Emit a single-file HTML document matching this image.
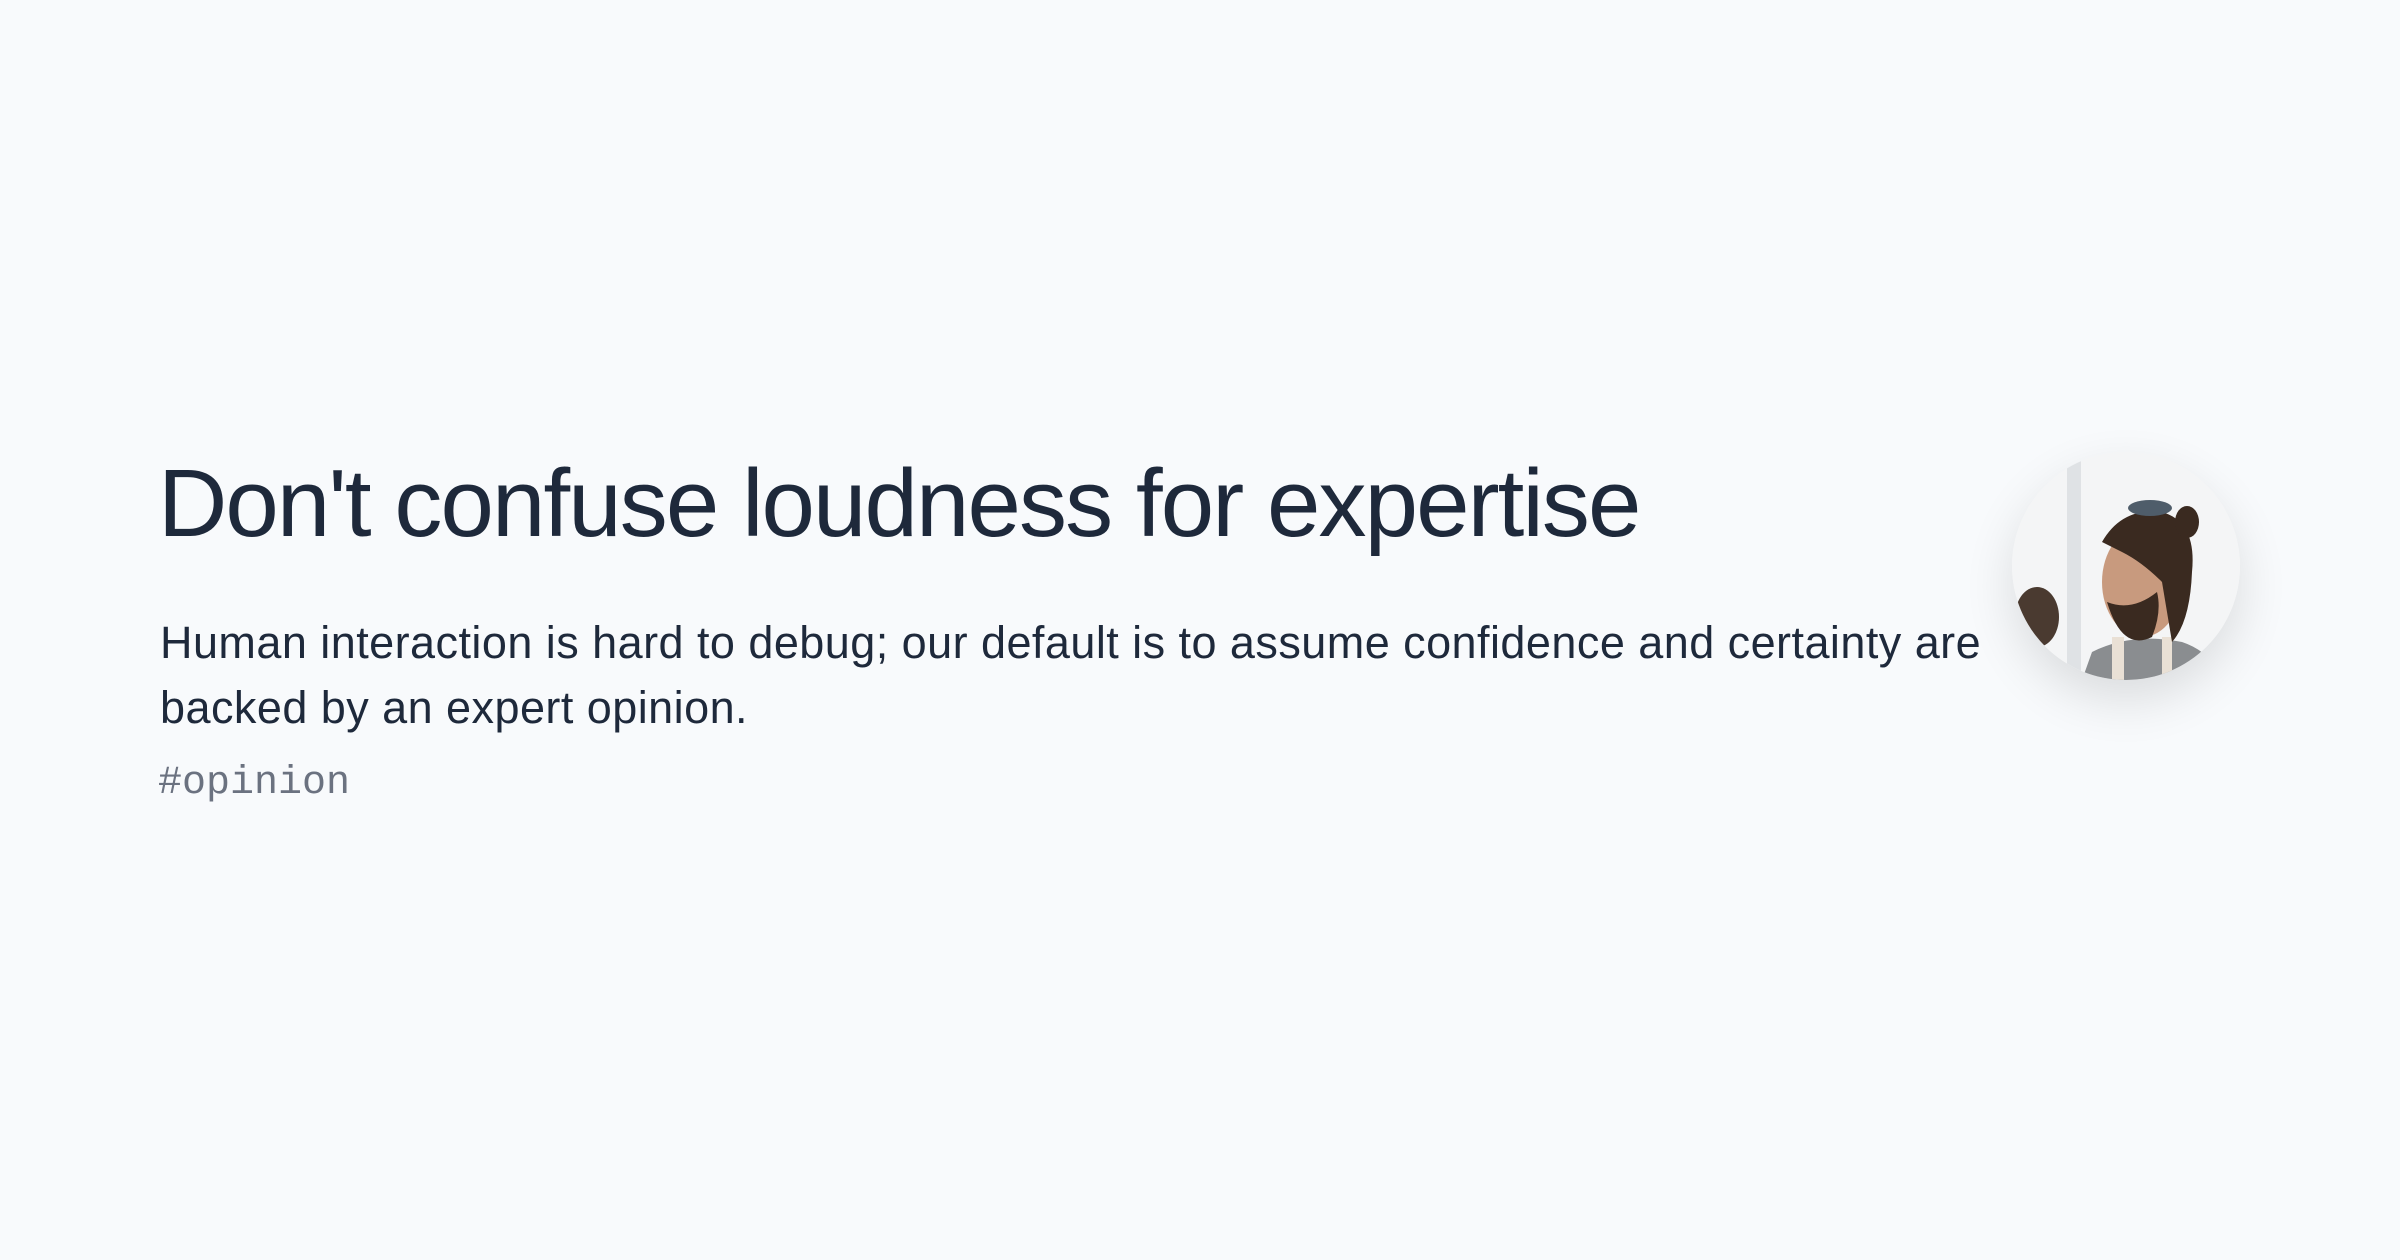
<!DOCTYPE html>
<html><head><meta charset="utf-8"><style>
html,body{margin:0;padding:0;width:2400px;height:1260px;background:#f8fafc;overflow:hidden}
.t{position:absolute;left:158px;top:446px;font:400 96px/1.2 "Liberation Sans",sans-serif;color:#1e293b;letter-spacing:-1.9px;white-space:nowrap;margin:0}
.p{position:absolute;left:160px;top:610px;width:1900px;font:400 45px/65px "Liberation Sans",sans-serif;color:#1e293b;letter-spacing:0.45px;margin:0}
.tag{position:absolute;left:158px;top:760px;font:400 40px/1.2 "Liberation Mono",monospace;color:#6b7280}
.av{position:absolute;left:2012px;top:452px;width:228px;height:228px;border-radius:50%;overflow:hidden;background:#f5f6f7;box-shadow:0 20px 50px rgba(0,0,0,.12)}
</style></head><body>
<h1 class="t">Don't confuse loudness for expertise</h1>
<p class="p">Human interaction is hard to debug; our default is to assume confidence and certainty are backed by an expert opinion.</p>
<div class="tag">#opinion</div>
<div class="av"><svg width="228" height="228" viewBox="0 0 228 228">
<rect width="228" height="228" fill="#f4f5f6"/>
<rect x="55" y="0" width="14" height="228" fill="#dfe2e5"/>
<ellipse cx="25" cy="165" rx="22" ry="30" fill="#4a3a30"/>
<path d="M70 228 L80 200 Q120 180 170 190 Q200 200 210 228 Z" fill="#8a8d90"/>
<rect x="100" y="185" width="12" height="43" fill="#e9e0d5"/>
<rect x="150" y="185" width="10" height="43" fill="#e9e0d5"/>
<ellipse cx="130" cy="130" rx="40" ry="55" fill="#c89a7e"/>
<path d="M90 90 Q110 55 150 60 Q185 70 180 120 Q178 170 160 190 L150 130 Q130 110 110 100 Z" fill="#3a2a20"/>
<path d="M95 150 Q110 200 140 185 Q150 160 145 140 Q120 160 95 150Z" fill="#3a2a20"/>
<ellipse cx="175" cy="70" rx="12" ry="16" fill="#3a2a20"/>
<ellipse cx="138" cy="56" rx="22" ry="8" fill="#4f5d6a"/>
</svg></div>
</body></html>
